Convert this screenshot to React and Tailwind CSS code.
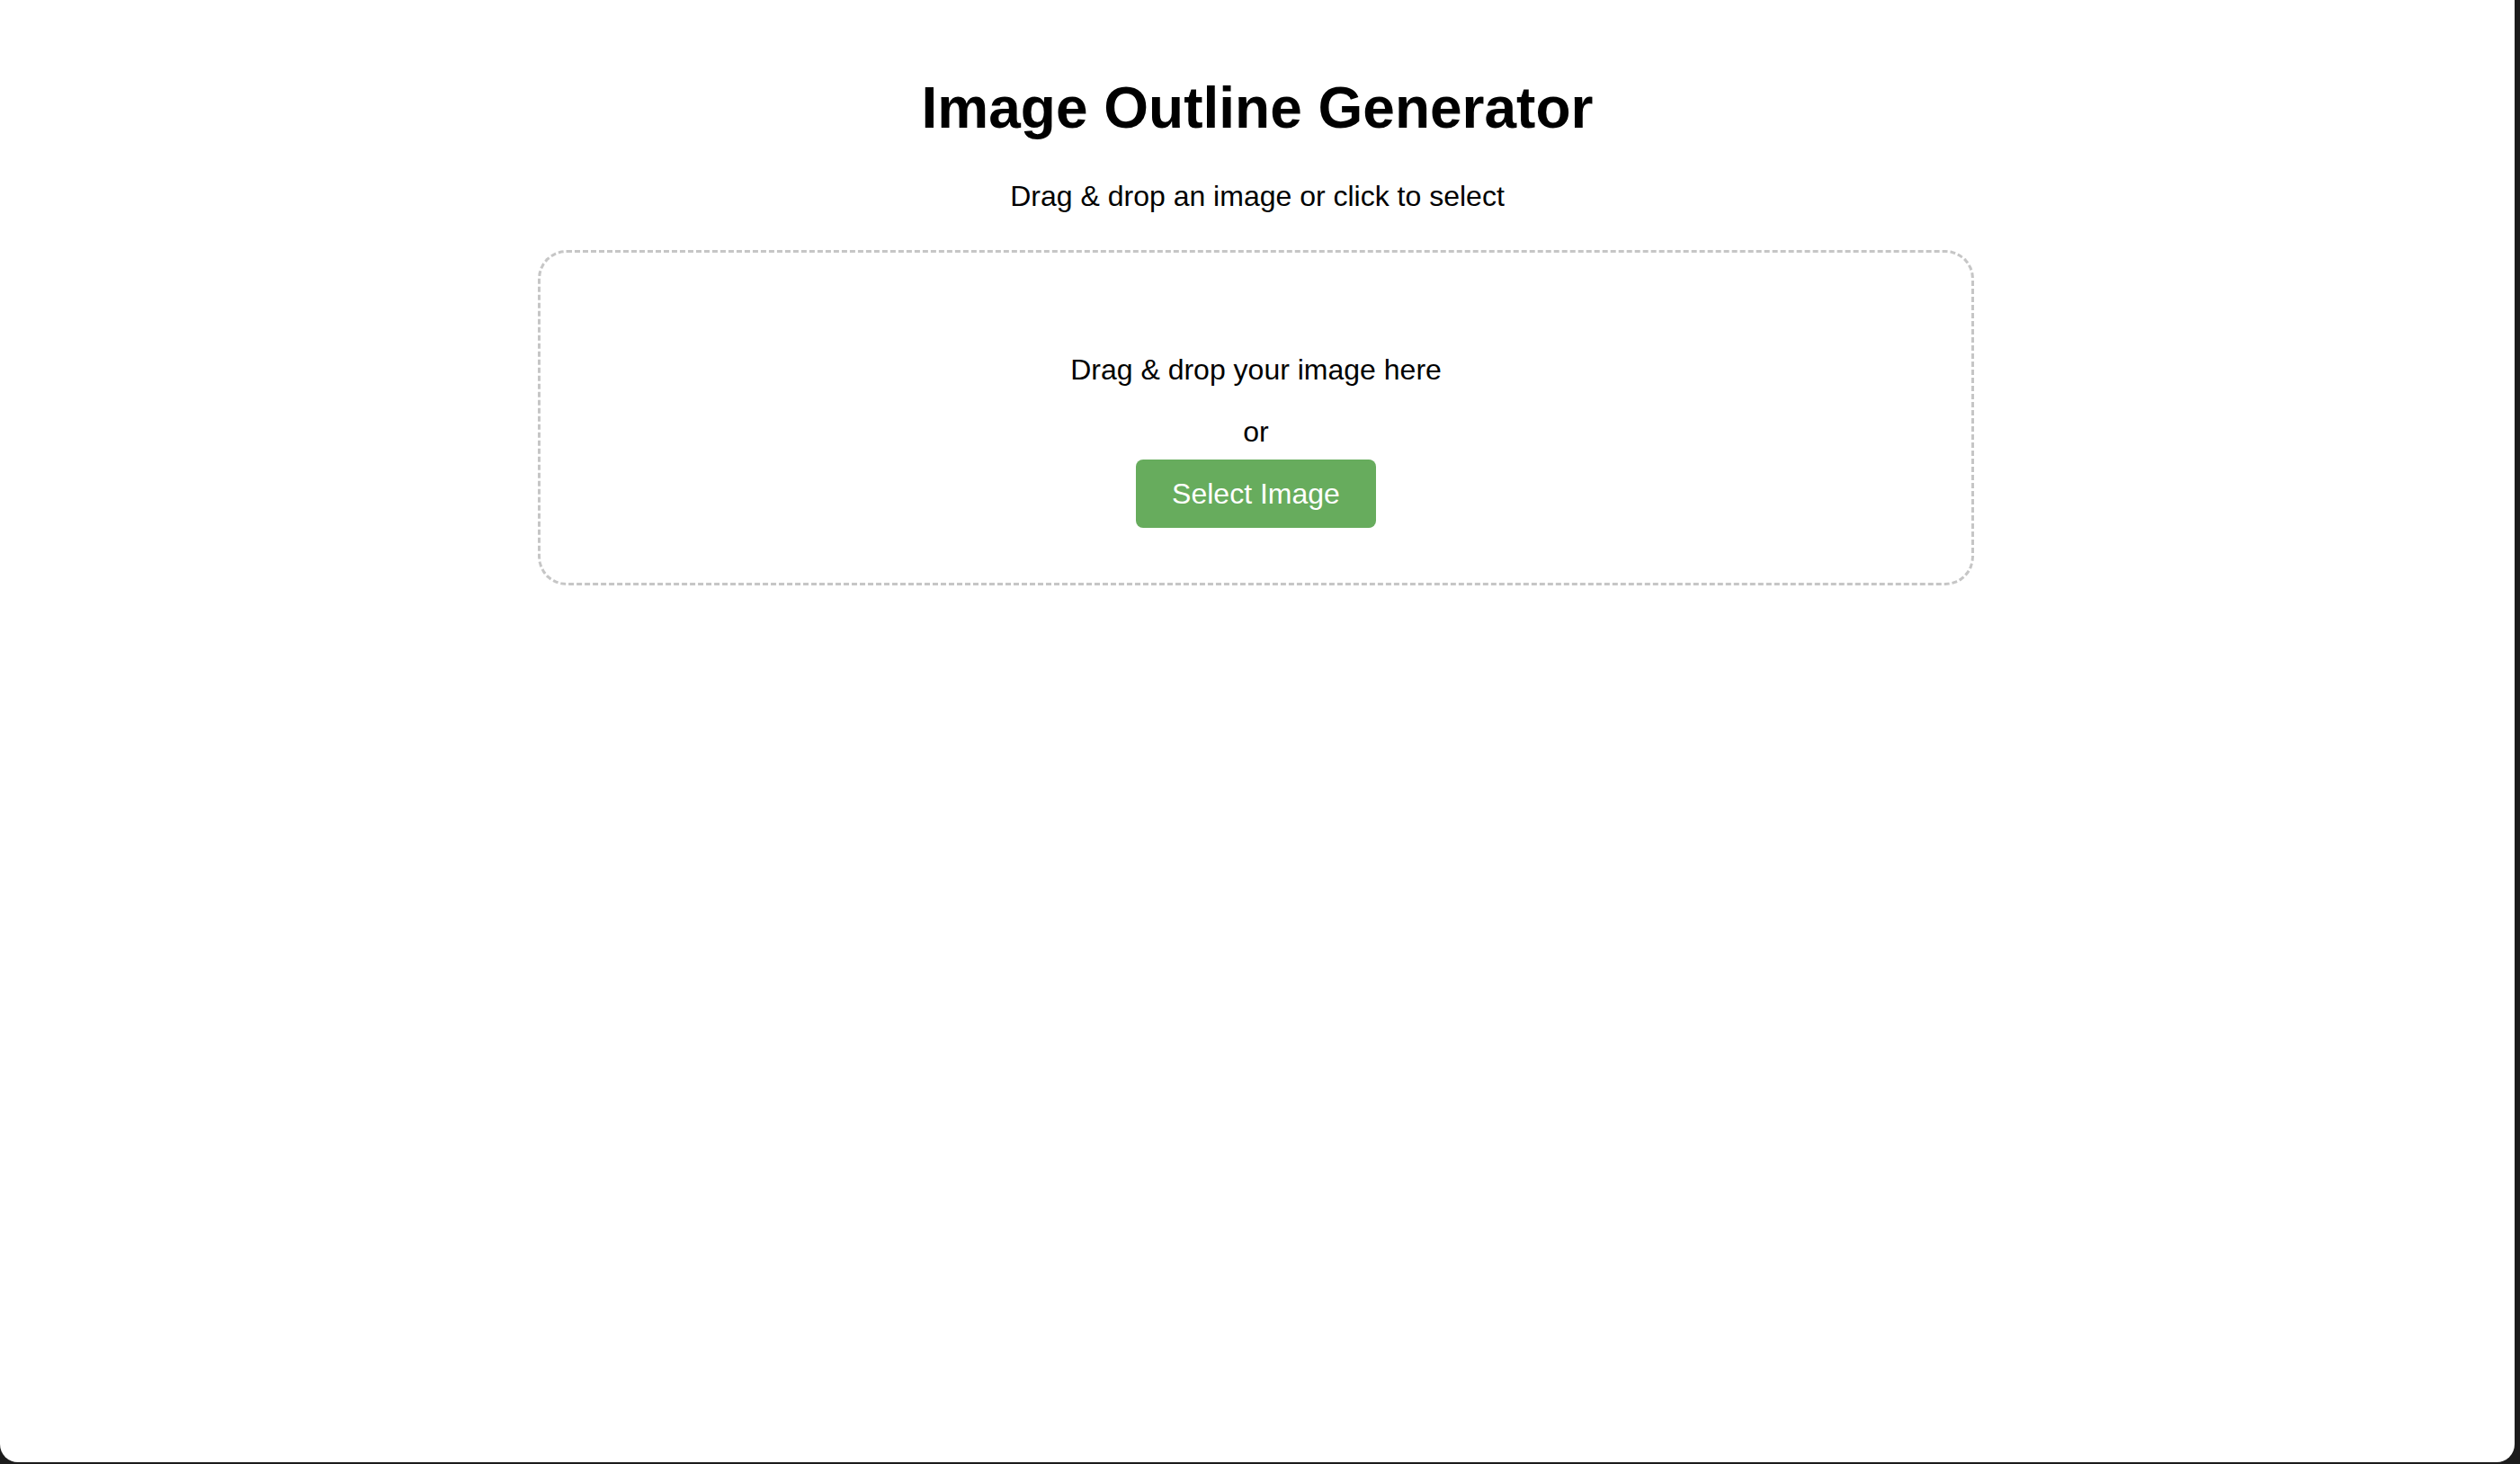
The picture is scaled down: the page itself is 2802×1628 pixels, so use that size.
export default function App() {
  return (
    <div className="w-[2802px] h-[1628px] bg-[#1c1c1c] overflow-hidden" style={{ fontFamily: '"Liberation Sans", Arial, sans-serif' }}>
      <div className="w-[2796px] h-[1626px] bg-white rounded-b-[20px] pt-[40px] flex flex-col text-black">
        <h1 className="mt-[43px] text-center text-[64px] leading-[74px] font-bold">Image Outline Generator</h1>
        <p className="mt-[43px] text-center text-[32px] leading-[37px]">Drag &amp; drop an image or click to select</p>
        <div className="mt-[41px] ml-[598px] w-[1597px] h-[373px] border-[3px] border-dashed border-[#c6c6c6] rounded-[32px] pt-[112px] flex flex-col items-center">
          <p className="text-[32px] leading-[37px]">Drag &amp; drop your image here</p>
          <p className="mt-[32px] text-[32px] leading-[37px]">or</p>
          <button className="mt-[12px] px-[40px] py-[20px] text-[32px] leading-[36px] text-white bg-[#67ac5d] rounded-[8px]">Select Image</button>
        </div>
      </div>
    </div>
  );
}
